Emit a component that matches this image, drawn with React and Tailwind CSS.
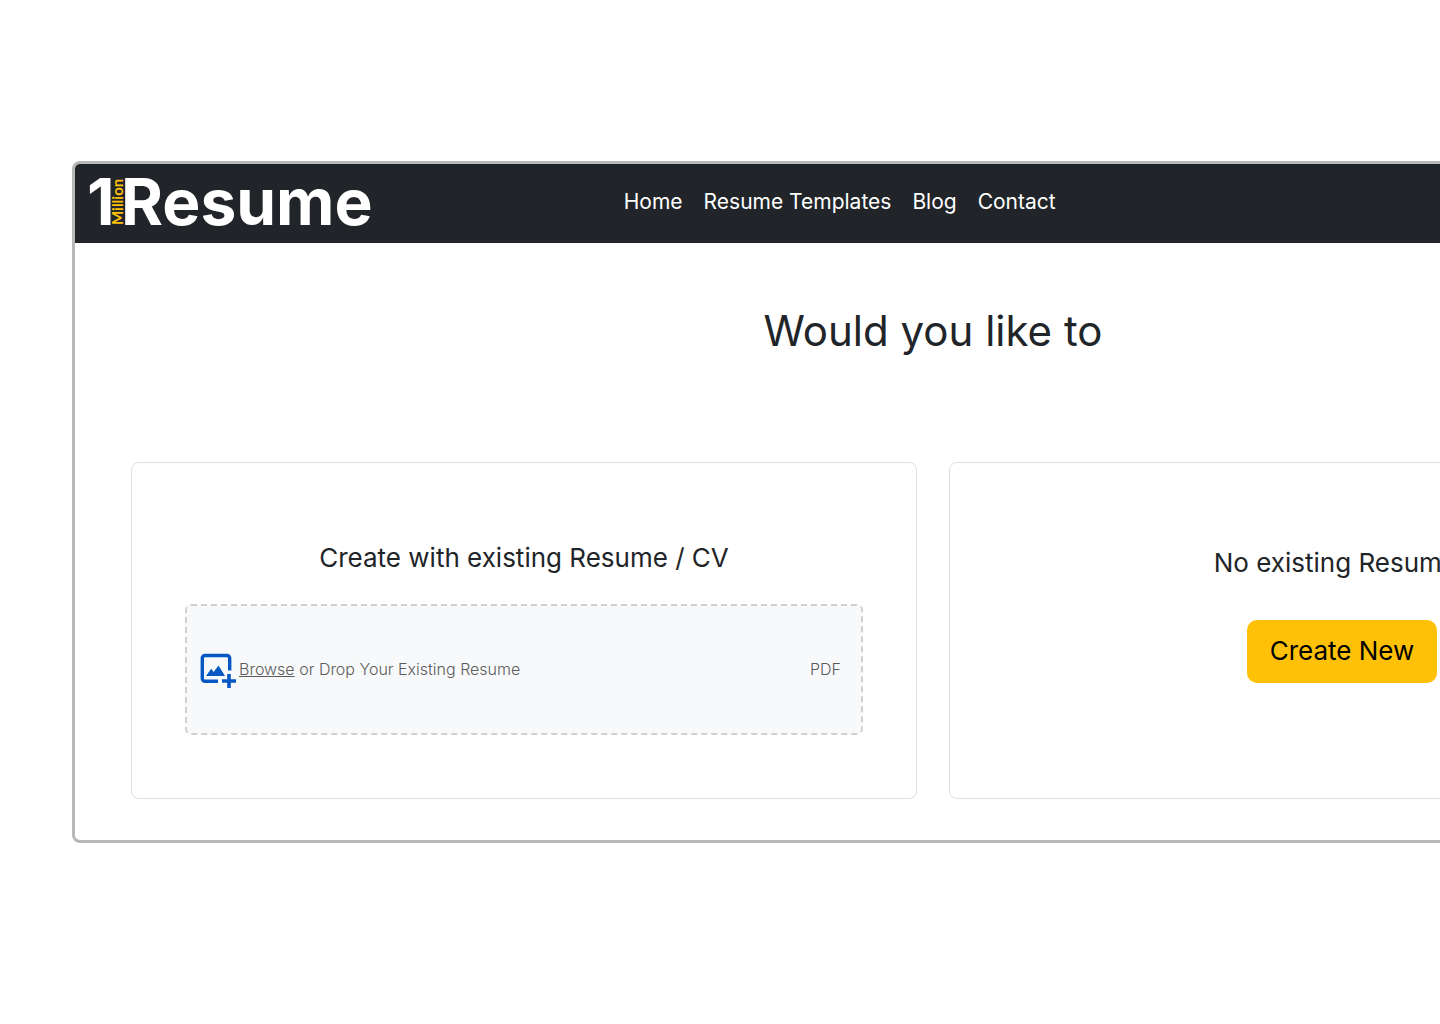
const NAV_LINKS = [
  { label: "Home", href: "#" },
  { label: "Resume Templates", href: "#templates" },
  { label: "Blog", href: "#blog" },
  { label: "Contact", href: "#contact" },
];

function Logo() {
  return (
    <a href="#" aria-label="1 Million Resume" className="shrink-0">
      <svg width="290" height="60" viewBox="0 0 290 60" overflow="visible" className="block">
        <text x="-2" y="51" fill="#fff" className="font-['Inter',sans-serif] text-[64px] font-bold">1</text>
        <text
          transform="translate(34 51) rotate(-90)"
          fill="#ffc107"
          className="font-['Lato',sans-serif] text-[15px] font-bold"
        >
          Million
        </text>
        <text x="32" y="51" fill="#fff" className="font-['Inter',sans-serif] text-[64px] font-bold">Resume</text>
      </svg>
    </a>
  );
}

function Navbar() {
  return (
    <header className="h-[79px] flex items-center px-3.5 bg-[#212529]">
      <Logo />
      <nav className="ml-[14.5%] pb-1 flex gap-[21px] text-[21px] text-white whitespace-nowrap">
        {NAV_LINKS.map(link => (
          <a key={link.label} href={link.href}>{link.label}</a>
        ))}
      </nav>
    </header>
  );
}

function AddImageIcon() {
  return (
    <svg width="36" height="36" viewBox="0 0 36 36" fill="none" className="shrink-0">
      <path d="M18 29.300H5a2.700 2.700 0 0 1-2.700-2.700V6.200A2.700 2.700 0 0 1 5 3.500h22a2.700 2.700 0 0 1 2.700 2.700v12.300" stroke="#0658c2" strokeWidth="3.400" />
      <path d="M6 24l5.200-7.300 2.500 3.300L18.500 13.500 25 24z" fill="#0658c2" />
      <path d="M29 22v14M22 29h14" stroke="#0658c2" strokeWidth="3.600" />
    </svg>
  );
}

function UploadCard() {
  return (
    <section className="px-[53px] pt-[75px] pb-[63px] border border-[#dedede] rounded-lg">
      <h2 className="text-[26px] leading-10 text-center">Create with existing Resume / CV</h2>
      <label className="mt-[26px] h-[131px] flex items-center pl-[13px] pr-5 rounded-md border-2 border-dashed border-[#d0d0d0] bg-[#f8f9fb] text-base text-[#5c5c5c] font-light cursor-pointer">
        <input type="file" accept="application/pdf" className="sr-only" />
        <AddImageIcon />
        <span className="ml-[3px] pb-0.5 flex-1">
          <span className="underline">Browse</span> or Drop Your Existing Resume
        </span>
        <span className="pb-0.5">PDF</span>
      </label>
    </section>
  );
}

function CreateCard() {
  return (
    <section className="pt-20 flex flex-col items-center border border-[#dedede] rounded-lg">
      <h2 className="text-[26px] leading-10">No existing Resume?</h2>
      <button className="mt-[37px] h-[63px] px-[23px] pb-0.5 rounded-[10px] bg-[#ffc107] text-[26px] text-black">
        Create New
      </button>
    </section>
  );
}

export default function App() {
  return (
    <div className="min-h-screen overflow-hidden bg-white pt-[161px] font-['Inter',sans-serif] text-[#212529]">
      <main className="ml-[5%] w-[calc(120%-6px)] border-3 border-[#b8b8b8] rounded-lg overflow-hidden">
        <Navbar />
        <h1 className="pt-[63px] text-[42px] leading-[50px] text-center">Would you like to</h1>
        <div className="mt-[106px] mb-[41px] mx-14 grid grid-cols-2 gap-8">
          <UploadCard />
          <CreateCard />
        </div>
      </main>
    </div>
  );
}
